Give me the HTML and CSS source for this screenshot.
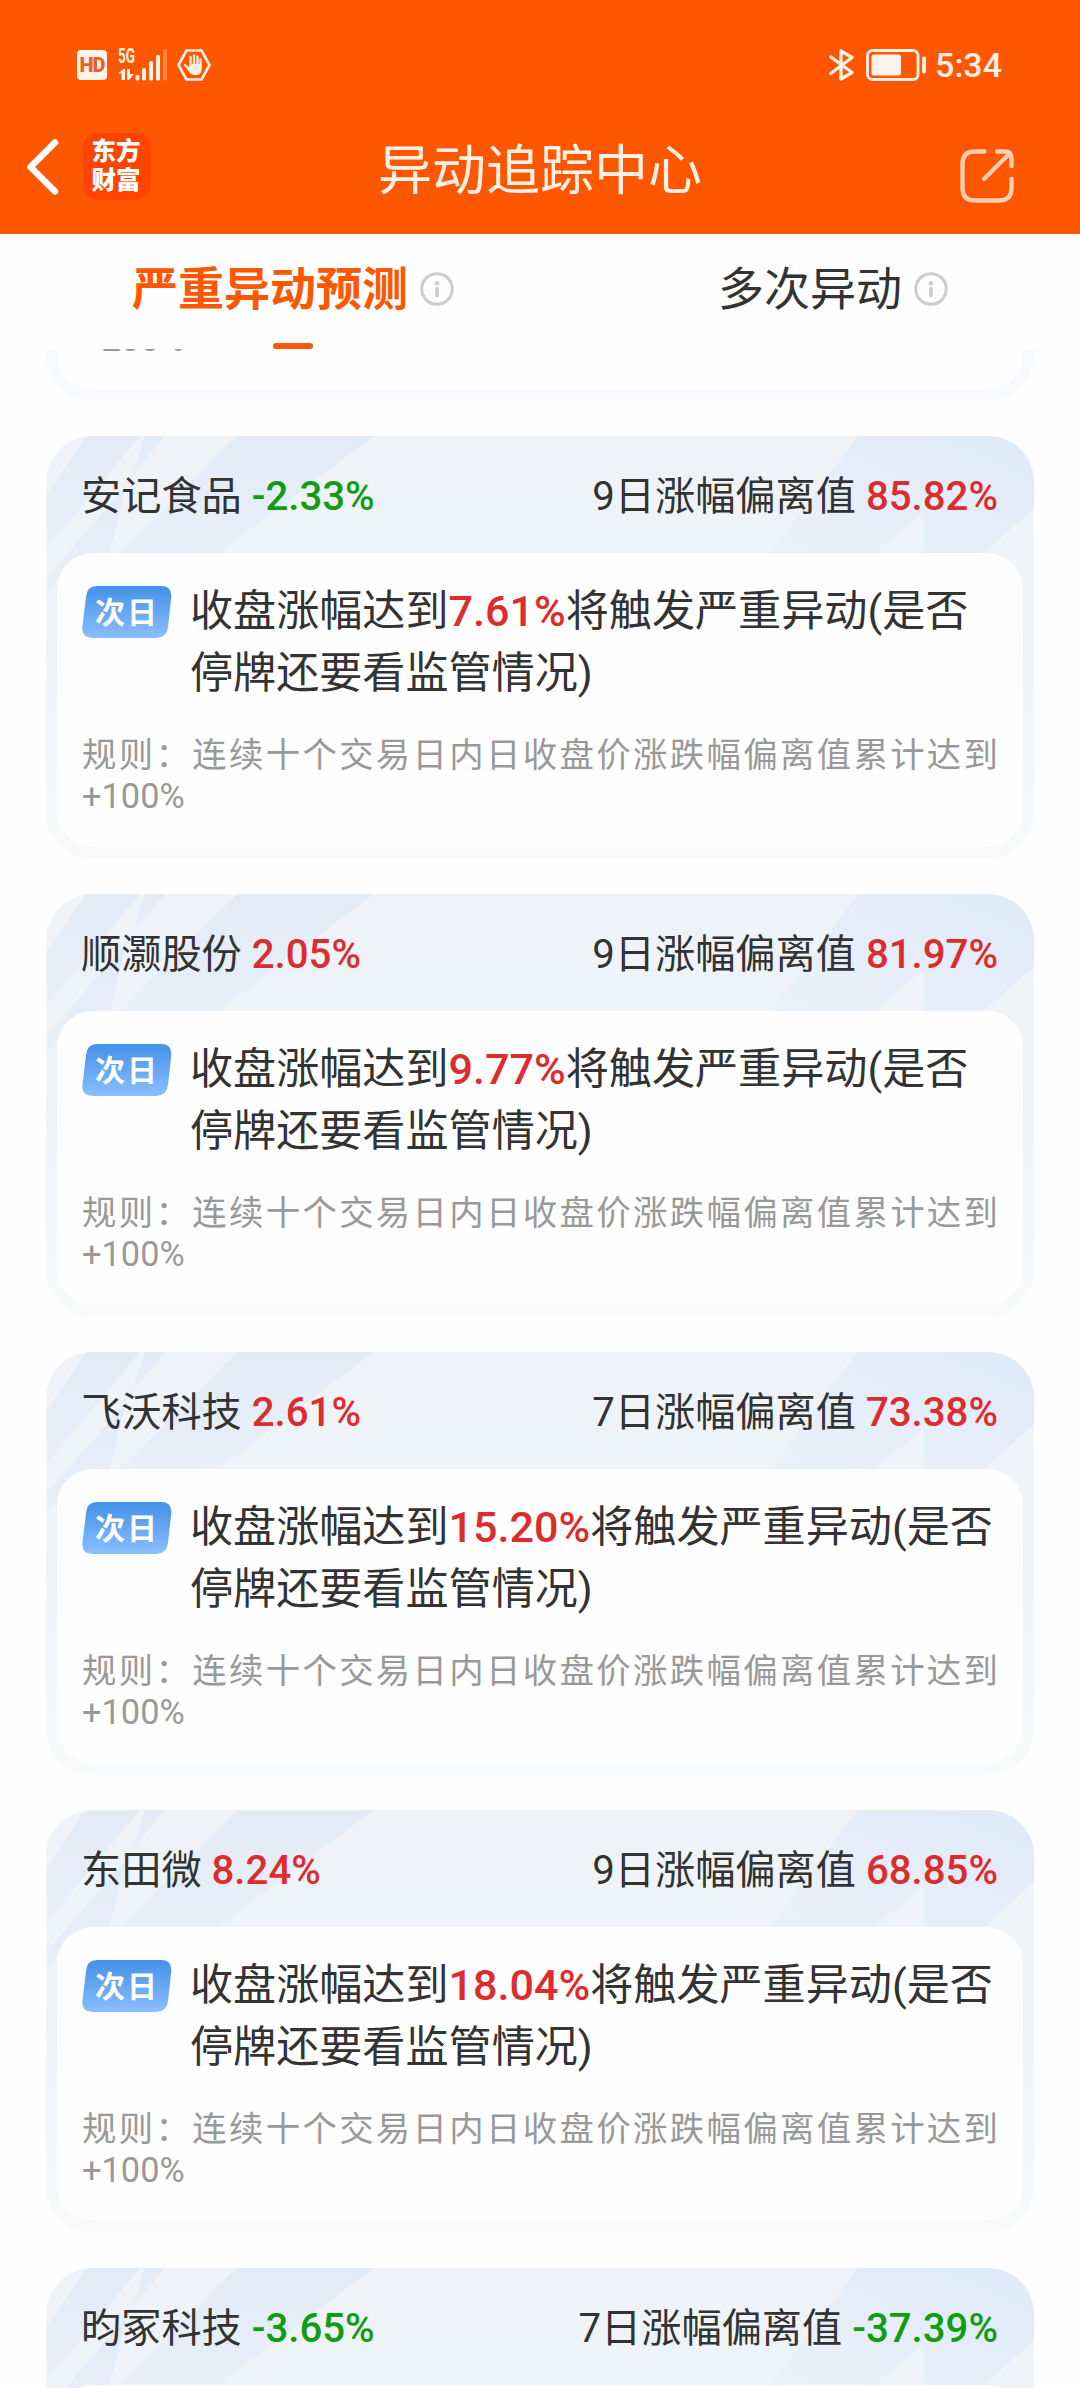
FILE: index.html
```html
<!DOCTYPE html>
<html lang="zh-CN">
<head>
<meta charset="utf-8">
<title>异动追踪中心</title>
<link rel="stylesheet" href="styles.css">
</head>
<body>
<svg class="defs" width="0" height="0" aria-hidden="true">
  <defs>
    <linearGradient id="streak" x1="0" y1="0" x2="0" y2="1">
      <stop offset="0" stop-color="#e1ebf6"/>
      <stop offset="1" stop-color="#e8f0fa"/>
    </linearGradient>
    <linearGradient id="streakRight" x1="0" y1="1" x2="1" y2="0">
      <stop offset="0" stop-color="#ebf1fa"/>
      <stop offset="1" stop-color="#deeaf8"/>
    </linearGradient>
    <linearGradient id="badgeFill" x1="0" y1="0" x2="0" y2="1">
      <stop offset="0" stop-color="#4391e8"/>
      <stop offset="1" stop-color="#8abeff"/>
    </linearGradient>
    <symbol id="rays" viewBox="0 0 988 160">
      <path fill="url(#streak)" d="M40 0H94L0 113V60Z"/>
      <path fill="url(#streak)" d="M99 0H119L86 40Z"/>
      <path fill="url(#streak)" d="M80 50L64 117H40L0 160V142Z"/>
      <path fill="url(#streak)" d="M191 0H328L172 117H74Z"/>
      <path fill="url(#streakRight)" d="M812 0H988V72L938 117H878V76L828 117H724Z"/>
    </symbol>
    <symbol id="info" viewBox="0 0 34 34">
      <circle cx="17" cy="17" r="15.300" fill="none" stroke="#ccc" stroke-width="3"/>
      <circle cx="17" cy="11.300" r="2.200" fill="#ccc"/>
      <path d="M17 16.500V23.500" stroke="#ccc" stroke-width="3.600" stroke-linecap="round"/>
    </symbol>
    <symbol id="badge" viewBox="0 0 90 52">
      <path fill="url(#badgeFill)" d="M15 0H79Q90 0 89.300 11L86 41Q84.500 52 74 52H11Q-.5 52 .4 41L4 11Q5 0 15 0Z"/>
    </symbol>
  </defs>
</svg>

<header class="top">
  <div class="status">
    <div class="status-group status-left">
      <span class="hd">HD</span>
      <svg class="signal" width="50" height="32" viewBox="0 0 50 32">
        <text class="net" x="0" y="14" textLength="17" lengthAdjust="spacingAndGlyphs">5G</text>
        <path fill="#fff0e6" d="M0 24.500L5.500 20H7V31H3.500V24.500ZM9 20H12V25H16L11 31H9Z"/>
        <g fill="#fff0e6">
          <rect x="17.500" y="26" width="4" height="5.500" rx="1.500"/>
          <rect x="24" y="19" width="4" height="12.500" rx="1.500"/>
          <rect x="31" y="12" width="4" height="19.500" rx="1.500"/>
          <rect x="38" y="6" width="4" height="25.500" rx="1.500"/>
          <rect x="45" y="0" width="4" height="31.500" rx="1.500" opacity=".3"/>
        </g>
      </svg>
      <svg class="hand" width="34" height="32" viewBox="0 0 34 32">
        <path fill="none" stroke="#fff0e6" stroke-width="2.600" stroke-linejoin="round" d="M9.500 1.500H24.500L32.500 16L24.500 30.500H9.500L1.500 16Z"/>
        <g stroke="#fff0e6" stroke-width="2.300" stroke-linecap="round" fill="none">
          <path d="M13.500 8V18M17 6.500V18M20.500 7.500V18M23.500 10.500V19M8 16L13 21"/>
        </g>
        <path fill="#fff0e6" d="M12.300 15H24.600V21Q24 26 20 26H16.500Q14 26 12 23L9.500 19H12.300Z"/>
      </svg>
    </div>
    <div class="status-group">
      <svg class="bt" width="25" height="32" viewBox="0 0 25 32">
        <path fill="none" stroke="#fff0e6" stroke-width="3.400" stroke-linejoin="round" stroke-linecap="round" d="M1.800 8L23 23.500L12 30V2L23 8.500L1.800 24.500"/>
      </svg>
      <svg class="battery" width="60" height="32" viewBox="0 0 60 32">
        <rect x="1.500" y="1.500" width="50.500" height="29" rx="5" fill="none" stroke="#fff0e6" stroke-width="2.800"/>
        <rect x="5.500" y="5.500" width="29.500" height="21" rx="2.500" fill="#fff3ec"/>
        <rect x="56" y="7.500" width="4" height="17" rx="1.800" fill="#fff0e6"/>
      </svg>
      <span class="clock">5:34</span>
    </div>
  </div>
  <div class="nav">
    <div class="nav-left">
      <svg class="back" width="34" height="56" viewBox="0 0 34 56">
        <path fill="none" stroke="#fff" stroke-width="6.500" stroke-linecap="round" stroke-linejoin="round" d="M29 3.500L4.500 28L29 52.500"/>
      </svg>
      <div class="logo"><span>东方</span><span>财富</span></div>
    </div>
    <h1 class="title">异动追踪中心</h1>
    <svg class="share" width="54" height="54" viewBox="0 0 54 54">
      <path fill="none" stroke="#ffcfb3" stroke-width="4.400" stroke-linecap="round" stroke-linejoin="round" d="M24.500 2.500H15Q2.500 2.500 2.500 15V39Q2.500 51.500 15 51.500H39Q51.500 51.500 51.500 39V30M37 2.500H45Q51.500 2.500 51.500 9V17M50 4L24 30"/>
    </svg>
  </div>
</header>

<nav class="tabs">
  <div class="tab tab-active"><span>严重异动预测</span><svg width="34" height="34"><use href="#info"/></svg></div>
  <div class="tab"><span>多次异动</span><svg width="34" height="34"><use href="#info"/></svg></div>
</nav>

<main class="list">
  <article class="card card-partial">
    <div class="panel"><p class="rule">+200%</p></div>
  </article>

  <article class="card">
    <svg class="rays" width="988" height="160"><use href="#rays"/></svg>
    <div class="card-head">
      <span>安记食品 <b class="down">-2.33%</b></span>
      <span>9日涨幅偏离值 <b class="up">85.82%</b></span>
    </div>
    <div class="panel">
      <div class="forecast">
        <span class="badge"><svg width="90" height="52"><use href="#badge"/></svg><span>次日</span></span>
        <p>收盘涨幅达到<b class="up">7.61%</b>将触发严重异动(是否停牌还要看监管情况)</p>
      </div>
      <p class="rule">规则：连续十个交易日内日收盘价涨跌幅偏离值累计达到+100%</p>
    </div>
  </article>

  <article class="card">
    <svg class="rays" width="988" height="160"><use href="#rays"/></svg>
    <div class="card-head">
      <span>顺灏股份 <b class="up">2.05%</b></span>
      <span>9日涨幅偏离值 <b class="up">81.97%</b></span>
    </div>
    <div class="panel">
      <div class="forecast">
        <span class="badge"><svg width="90" height="52"><use href="#badge"/></svg><span>次日</span></span>
        <p>收盘涨幅达到<b class="up">9.77%</b>将触发严重异动(是否停牌还要看监管情况)</p>
      </div>
      <p class="rule">规则：连续十个交易日内日收盘价涨跌幅偏离值累计达到+100%</p>
    </div>
  </article>

  <article class="card">
    <svg class="rays" width="988" height="160"><use href="#rays"/></svg>
    <div class="card-head">
      <span>飞沃科技 <b class="up">2.61%</b></span>
      <span>7日涨幅偏离值 <b class="up">73.38%</b></span>
    </div>
    <div class="panel">
      <div class="forecast">
        <span class="badge"><svg width="90" height="52"><use href="#badge"/></svg><span>次日</span></span>
        <p>收盘涨幅达到<b class="up">15.20%</b>将触发严重异动(是否停牌还要看监管情况)</p>
      </div>
      <p class="rule">规则：连续十个交易日内日收盘价涨跌幅偏离值累计达到+100%</p>
    </div>
  </article>

  <article class="card">
    <svg class="rays" width="988" height="160"><use href="#rays"/></svg>
    <div class="card-head">
      <span>东田微 <b class="up">8.24%</b></span>
      <span>9日涨幅偏离值 <b class="up">68.85%</b></span>
    </div>
    <div class="panel">
      <div class="forecast">
        <span class="badge"><svg width="90" height="52"><use href="#badge"/></svg><span>次日</span></span>
        <p>收盘涨幅达到<b class="up">18.04%</b>将触发严重异动(是否停牌还要看监管情况)</p>
      </div>
      <p class="rule">规则：连续十个交易日内日收盘价涨跌幅偏离值累计达到+100%</p>
    </div>
  </article>

  <article class="card">
    <svg class="rays" width="988" height="160"><use href="#rays"/></svg>
    <div class="card-head">
      <span>昀冢科技 <b class="down">-3.65%</b></span>
      <span>7日涨幅偏离值 <b class="down">-37.39%</b></span>
    </div>
    <div class="panel"></div>
  </article>
</main>
</body>
</html>
```

FILE: styles.css
```css
* {
  box-sizing: border-box;
}

body {
  margin: 0;
  width: 1080px;
  height: 2388px;
  overflow: hidden;
  display: flex;
  flex-direction: column;
  background: #fefefe;
  color: #333;
  font-family: Roboto, "Noto Sans CJK SC", sans-serif;
}

p,
h1 {
  margin: 0;
  font-weight: 400;
}

svg {
  display: block;
  flex: none;
}

.defs {
  position: absolute;
}

/* Status bar and title */
.top {
  flex: none;
  height: 234px;
  background: #ff5600;
  color: #fff0e6;
}

.status {
  display: flex;
  justify-content: space-between;
  height: 132px;
  padding: 48px 78px 0 77px;
}

.status-group {
  display: flex;
  align-items: center;
  height: 34px;
}

.hd {
  width: 30px;
  height: 30px;
  border-radius: 4px;
  background: #fff3ec;
  color: #e8651f;
  font: 900 20px/31px Roboto, sans-serif;
  letter-spacing: -1px;
  text-align: center;
}

.signal {
  margin-left: 11px;
  overflow: visible;
}

.net {
  fill: #fff0e6;
  font: 700 20px Roboto, sans-serif;
}

.hand {
  margin-left: 9px;
}

.battery {
  margin-left: 12px;
}

.clock {
  margin-left: 9px;
  font-size: 34px;
  font-weight: 500;
  line-height: 34px;
}

.nav {
  display: grid;
  grid-template-columns: 1fr auto 1fr;
  align-items: start;
  padding: 0 66px 0 26px;
}

.nav-left {
  display: flex;
  padding-top: 1px;
}

.back {
  margin-top: 6px;
}

.logo {
  display: flex;
  flex-direction: column;
  align-items: center;
  width: 68px;
  height: 67px;
  margin-left: 23px;
  padding: 4px 2px 0 0;
  border-radius: 15px;
  background: #ff4400;
  color: #fff;
  font-size: 24.500px;
  font-weight: 900;
  line-height: 29px;
}

.title {
  margin-top: 3px;
  padding-left: 40px;
  font-size: 54px;
  line-height: 74px;
}

.share {
  justify-self: end;
  margin-top: 17px;
}

/* Tabs */
.tabs {
  flex: none;
  display: flex;
  justify-content: space-between;
  height: 115px;
  padding: 20px 132px 0;
}

.tab {
  display: flex;
  flex-wrap: wrap;
  align-items: center;
  align-content: start;
  column-gap: 12px;
  font-size: 46px;
  line-height: 70px;
}

.tab-active {
  width: 322px;
  color: #ff5600;
  font-weight: 700;
}

.tab-active::after {
  content: "";
  width: 40px;
  height: 6px;
  margin: 19px auto 0;
  border-radius: 3px;
  background: #f4590d;
}

/* Prediction cards */
.list {
  flex: none;
  display: flex;
  flex-direction: column;
  gap: 35px;
  height: 2039px;
  overflow: hidden;
  padding: 0 46px;
}

.card {
  position: relative;
  flex: none;
  height: 423px;
  padding: 0 11px 12px;
  border-radius: 46px;
  overflow: hidden;
  background: linear-gradient(#eff3f8, #eff4f9 45%, #f8f9fb);
}

.card-partial {
  display: flex;
  align-items: flex-end;
  height: 52px;
  border-radius: 0 0 46px 46px;
  background: #f7f9fc;
}

.card-partial .panel {
  width: 100%;
  height: auto;
  padding: 0 25px 30px;
}

.card-partial .rule {
  margin-top: 0;
}

.rays {
  position: absolute;
  top: 0;
  left: 0;
}

.card-head {
  position: relative;
  display: flex;
  justify-content: space-between;
  height: 117px;
  padding: 0 25px 0 24px;
  font-size: 40.200px;
  line-height: 122px;
  white-space: nowrap;
}

b {
  font-weight: 500;
}

.up {
  color: #dd2c2e;
}

.down {
  color: #119c11;
}

.panel {
  position: relative;
  height: 294px;
  padding: 28px 25px 0;
  border-radius: 36px;
  background: #fefefe;
}

.forecast {
  display: flex;
  gap: 18px;
  font-size: 43.100px;
  line-height: 62px;
}

.forecast p {
  flex: 1;
}

.badge {
  display: grid;
  flex: none;
  width: 90px;
  height: 52px;
  margin-top: 5px;
  color: #fff;
  font-size: 30px;
  font-weight: 700;
  line-height: 53px;
  letter-spacing: 2px;
  text-align: center;
}

.badge > * {
  grid-area: 1 / 1;
}

.badge > span {
  position: relative;
}

.rule {
  margin-top: 30px;
  color: #999;
  font-size: 34.400px;
  line-height: 40.500px;
  text-align: justify;
}
```
